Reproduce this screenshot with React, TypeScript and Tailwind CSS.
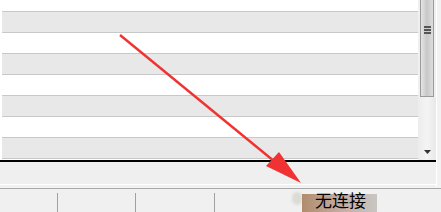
import React from 'react';

const GrayRow = () => (
  <div className="h-[22px] border-y border-[#c8c8c8] bg-[#e8e8e8]" />
);

const WhiteRow = () => <div className="h-[20px] bg-white" />;

const Scrollbar = () => (
  <div className="flex w-[18px] flex-col bg-[#f0f0f0]">
    <div className="flex h-[97px] pl-[2px] pr-[2px]">
      <div className="flex flex-1 flex-col items-center justify-start border border-[#9a9a9a] border-t-0 bg-gradient-to-r from-[#e4e4e4] via-[#c8c8c8] to-[#dedede] pt-[26px]">
        <div className="flex flex-col gap-[1px]">
          <div className="h-[2px] w-[7px] bg-[#555]" />
          <div className="h-[2px] w-[7px] bg-[#555]" />
          <div className="h-[2px] w-[7px] bg-[#555]" />
        </div>
      </div>
    </div>
    <div className="flex flex-1 flex-col items-center justify-end bg-gradient-to-r from-[#ececec] via-[#f4f4f4] to-[#e8e8e8] pb-[6px]">
      <svg width="7" height="4" viewBox="0 0 7 4">
        <polygon points="0,0 7,0 3.5,4" fill="#333" />
      </svg>
    </div>
  </div>
);

export default function App() {
  return (
    <div className="relative h-[212px] w-[441px] overflow-hidden bg-[#f0f0f0] font-['Noto_Sans_CJK_SC',sans-serif]">
      <div className="flex h-full">
        <div className="flex w-[436px] flex-col">
          <div className="flex h-[160px]">
            <div className="flex flex-1 flex-col bg-white pl-[2px]">
              <div className="h-[11px]" />
              <GrayRow />
              <WhiteRow />
              <GrayRow />
              <WhiteRow />
              <GrayRow />
              <WhiteRow />
              <GrayRow />
              <div className="h-px" />
            </div>
            <Scrollbar />
          </div>
          <div className="h-[2px] bg-black" />
          <div className="h-[23px] border-b border-white bg-[#efefef]" />
        </div>
        <div className="w-[5px] border-l border-white bg-[#f2f2f2]" />
      </div>

      <div className="absolute bottom-0 left-0 right-0 top-[187px] flex flex-col">
        <div className="h-[1px] bg-[#f4f4f4]" />
        <div className="h-[1px] bg-[#a8a8a8]" />
        <div className="flex flex-1 items-end bg-[#f0f0f0]">
          <div className="h-[19px] w-[58px] border-r border-[#a0a0a0]" />
          <div className="h-[19px] w-[78px] border-r border-[#a0a0a0]" />
          <div className="h-[19px] w-[79px] border-r border-[#a0a0a0]" />
          <div className="relative h-[23px] flex-1">
            <div className="absolute left-[77px] top-[3px] h-[13px] w-[10px] rounded-full bg-[#dcdcd6] blur-[1px]" />
            <div className="absolute bottom-0 left-[87px] top-[5px] w-[75px] bg-gradient-to-r from-[#b08c6c] via-[#c4aca4] to-[#c8c6c2]" />
            <span className="absolute left-[100px] top-[0px] text-[17px] leading-[22px] text-black">无连接</span>
          </div>
        </div>
      </div>

      <svg className="pointer-events-none absolute left-0 top-0" width="441" height="212" viewBox="0 0 441 212">
        <line x1="120" y1="35" x2="280" y2="166" stroke="#f03232" strokeWidth="2.4" />
        <polygon points="301,183 266,166 279,152" fill="#f03232" />
      </svg>
    </div>
  );
}
